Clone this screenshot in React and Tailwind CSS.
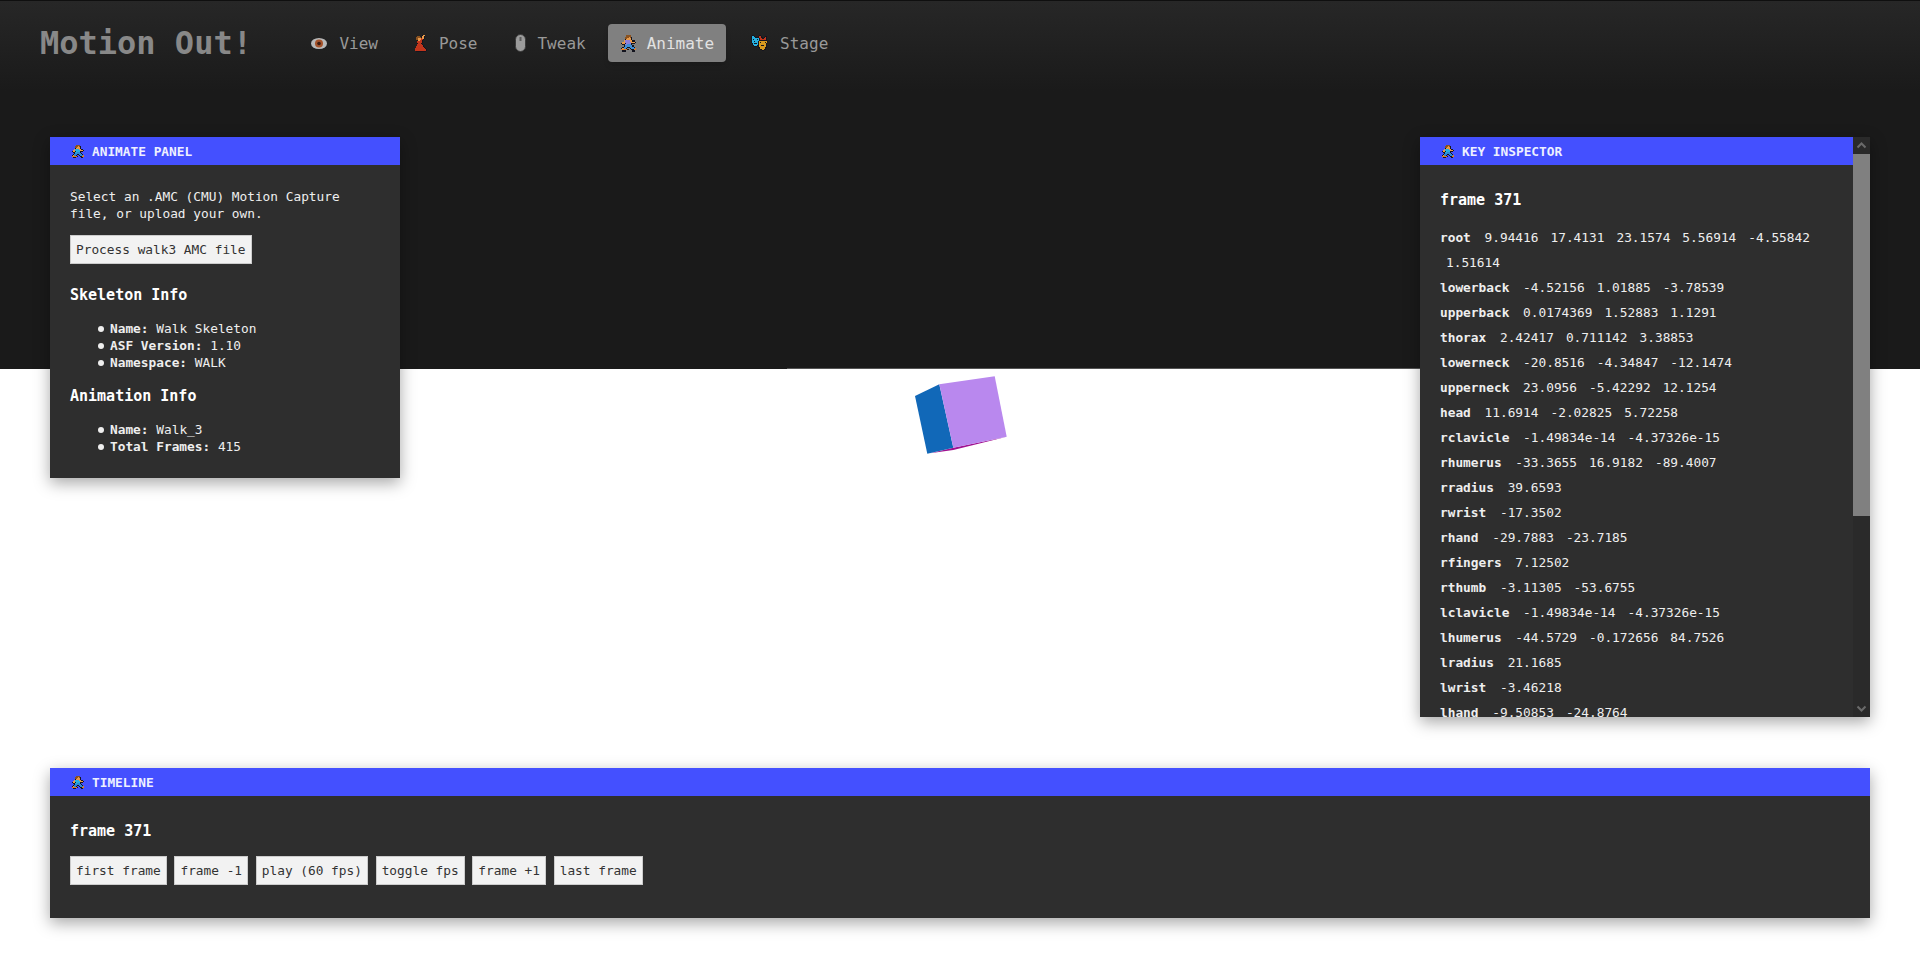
const runner = [
  "....hhhh....",
  "...hhhshk...",
  "...hhsssk...",
  "...kssssk...",
  "..sbbbbsskk.",
  ".ssbbbbbsssk",
  "ksskbbbbkkk.",
  ".kkbbpppk...",
  "..kppppppk..",
  ".kpppkkpppk.",
  "ksppk..kpppo",
  "oooook..kkoo",
  ".kkk.....kk.",
];

const dancer = [
  ".......kss...",
  "..hhh.kssk...",
  ".hhhhhkssk...",
  ".hhsssrssk...",
  ".hhsssrrk....",
  "..kssrrk.....",
  "..rrrrrk.....",
  "..rrrrrk.....",
  "..krrrk......",
  "..rrrrrk.....",
  "..rrrrrrk....",
  ".rrrrrrrk....",
  ".rrrrrrrrk...",
  "rrrrrrrrrrk..",
  "rrrrrrrrrrrk.",
  "rrrrrrrrrrrk.",
  ".kkkkkkkkkk..",
];

const masks = [
  "..kk.....kk.......",
  ".kbbk...krrk...kk.",
  ".kbbbkkkkrrkk.krk.",
  ".kbbbbbbbkrrkkrrk.",
  ".kbkbbbkbkrrrrrrk.",
  ".kbbbbbbbkkkkkkkk.",
  ".kbbkbbbkyyyyyyyyk",
  ".kbbbbbbkykyyyyky.",
  "..kbkkkbkyyyyyyyk.",
  "..kbbbbbkyyyyyyyk.",
  "...kbbbkkyykkkyyk.",
  "....kkk.kyyyyyyyk.",
  "........kkyyyyykk.",
  ".........kyyyyyk..",
  "..........kkyykk..",
  "............kk....",
];

const colors = {
  k: "#14141e",
  h: "#8a5220",
  s: "#e89a4a",
  b: "#25b0e0",
  p: "#2c86d8",
  o: "#e07a28",
  r: "#c2361c",
  y: "#d79a1e",
};

const navPalette = { ...colors, b: "#8f7fd8", p: "#3f8fd8" };

const PixelIcon = ({ rows, palette = colors, className = "" }) => (
  <svg
    viewBox={`0 0 ${rows[0].length} ${rows.length}`}
    shapeRendering="crispEdges"
    className={className}
  >
    {rows.map((row, y) =>
      row.split("").map((c, x) =>
        c === "." ? null : (
          <rect key={`${x}-${y}`} x={x} y={y} width="1" height="1" fill={palette[c]} />
        )
      )
    )}
  </svg>
);

const EyeIcon = () => (
  <svg viewBox="0 0 16 11" className="w-[16px] h-[11px]">
    <ellipse cx="8" cy="5.5" rx="8" ry="5.5" fill="#b9b9b9" />
    <circle cx="8" cy="5.5" r="4" fill="#a5532b" />
    <circle cx="8" cy="5.5" r="1.8" fill="#3b1c12" />
  </svg>
);

const MouseIcon = () => (
  <svg viewBox="0 0 11 18" className="w-[11px] h-[18px]">
    <rect x="0.5" y="0.5" width="10" height="17" rx="5" fill="#9b9b9b" stroke="#3a3a3a" />
    <rect x="4.5" y="3" width="2" height="4" fill="#5c5c5c" />
  </svg>
);

const navItems = [
  { label: "View", icon: <EyeIcon />, slot: "w-[28.5px] -ml-[1px]" },
  {
    label: "Pose",
    icon: <PixelIcon rows={dancer} className="w-[13px] h-[17px]" />,
    slot: "w-[27px] pl-[3.5px]",
  },
  { label: "Tweak", icon: <MouseIcon />, slot: "w-[26px] pl-[4px]" },
  {
    label: "Animate",
    icon: <PixelIcon rows={runner} palette={navPalette} className="w-[15px] h-[17px]" />,
    slot: "w-[27px] pl-[1px]",
    active: true,
  },
  {
    label: "Stage",
    icon: <PixelIcon rows={masks} className="w-[18px] h-[16px]" />,
    slot: "w-[32px] pl-[2px]",
  },
];

const keyRows = [
  ["root", "9.94416", "17.4131", "23.1574", "5.56914", "-4.55842", "1.51614"],
  ["lowerback", "-4.52156", "1.01885", "-3.78539"],
  ["upperback", "0.0174369", "1.52883", "1.1291"],
  ["thorax", "2.42417", "0.711142", "3.38853"],
  ["lowerneck", "-20.8516", "-4.34847", "-12.1474"],
  ["upperneck", "23.0956", "-5.42292", "12.1254"],
  ["head", "11.6914", "-2.02825", "5.72258"],
  ["rclavicle", "-1.49834e-14", "-4.37326e-15"],
  ["rhumerus", "-33.3655", "16.9182", "-89.4007"],
  ["rradius", "39.6593"],
  ["rwrist", "-17.3502"],
  ["rhand", "-29.7883", "-23.7185"],
  ["rfingers", "7.12502"],
  ["rthumb", "-3.11305", "-53.6755"],
  ["lclavicle", "-1.49834e-14", "-4.37326e-15"],
  ["lhumerus", "-44.5729", "-0.172656", "84.7526"],
  ["lradius", "21.1685"],
  ["lwrist", "-3.46218"],
  ["lhand", "-9.50853", "-24.8764"],
];

const timelineButtons = [
  "first frame",
  "frame -1",
  "play (60 fps)",
  "toggle fps",
  "frame +1",
  "last frame",
];

const PanelHeader = ({ title }) => (
  <div className="flex items-center h-[28px] shrink-0 pl-[22px] gap-[8px] bg-[#4450ff] text-[#eef0ff] font-bold uppercase">
    <PixelIcon rows={runner} className="w-[12px] h-[13px]" />
    <span>{title}</span>
  </div>
);

const Button = ({ children }) => (
  <button className="h-[29px] px-[5px] border border-[#cccccc] bg-[#f2f2f2] text-[#333333] whitespace-nowrap">
    {children}
  </button>
);

const Heading = ({ children, className = "" }) => (
  <h2 className={`text-[15px] leading-[20px] font-bold text-white ${className}`}>
    {children}
  </h2>
);

const Info = ({ items, className = "" }) => (
  <ul className={`pl-[40px] ${className}`}>
    {items.map(([k, v]) => (
      <li
        key={k}
        className="relative before:absolute before:left-[-12px] before:top-[6px] before:size-[6px] before:rounded-full before:bg-[#eeeeee]"
      >
        <b>{k}:</b> {v}
      </li>
    ))}
  </ul>
);

const Chevron = ({ points }) => (
  <svg viewBox="0 0 17 17" className="w-[17px] h-[17px]">
    <polyline points={points} fill="none" stroke="#6a6a6a" strokeWidth="2" />
  </svg>
);

const App = () => {
  return (
    <div className="relative min-h-screen border-t border-[#0f0f0f] pt-[23px] bg-[linear-gradient(#272727,#1a1a1a_90px,#1a1a1a_368px,#ffffff_368px)] font-['DejaVu_Sans_Mono','Liberation_Mono',monospace] text-[12.8px] leading-[17px] text-[#eeeeee]">
      {/* top bar */}
      <div className="flex items-center h-[38px] pl-[40px] gap-[48px]">
        <h1 className="text-[32px] leading-[38px] font-bold text-[#888888]">Motion Out!</h1>
        <nav className="flex gap-[10px] text-[16px]">
          {navItems.map((item) => (
            <div
              key={item.label}
              className={`flex items-center h-[38px] px-[12px] rounded-[4px] ${
                item.active
                  ? "bg-[#808080] text-[#e2e2e2] shadow-md"
                  : "text-[#999999]"
              }`}
            >
              <span className={`flex items-center shrink-0 ${item.slot}`}>{item.icon}</span>
              {item.label}
            </div>
          ))}
        </nav>
      </div>

      {/* edge of the stage canvas */}
      <div className="absolute left-[787px] top-[367px] w-[633px] h-[1px] bg-[#555555]" />

      {/* cube drawn on the stage */}
      <svg
        viewBox="0 0 100 85"
        className="absolute left-[910px] top-[372px] w-[100px] h-[85px]"
      >
        <polygon points="20,80.2 43.3,74.7 96.7,63.7 43.3,77" fill="#a0108f" />
        <polygon points="5,23 29.3,11.3 43.3,74.7 17.3,80.7" fill="#1168b8" />
        <polygon points="29.3,11.3 84.7,3.3 96.7,63.7 43.3,74.7" fill="#b988ee" />
      </svg>

      <div className="relative px-[50px] pt-[75px]">
        <div className="flex justify-between items-start h-[580px]">
          <section className="w-[350px] bg-[#2e2e2e] shadow-[0_5px_15px_rgba(0,0,0,0.35)]">
            <PanelHeader title="Animate Panel" />
            <div className="px-[20px] pt-[22.5px] pb-[23.5px]">
              <p>
                Select an .AMC (CMU) Motion Capture
                <br />
                file, or upload your own.
              </p>
              <div className="mt-[13.5px]">
                <Button>Process walk3 AMC file</Button>
              </div>
              <Heading className="mt-[21px]">Skeleton Info</Heading>
              <Info
                className="mt-[14.5px]"
                items={[
                  ["Name", "Walk Skeleton"],
                  ["ASF Version", "1.10"],
                  ["Namespace", "WALK"],
                ]}
              />
              <Heading className="mt-[15.5px]">Animation Info</Heading>
              <Info
                className="mt-[14.5px]"
                items={[
                  ["Name", "Walk_3"],
                  ["Total Frames", "415"],
                ]}
              />
            </div>
          </section>

          <section className="flex w-[450px] h-[580px] bg-[#2e2e2e] shadow-[0_5px_15px_rgba(0,0,0,0.35)]">
            <div className="flex flex-col flex-1 min-w-0 overflow-hidden">
              <PanelHeader title="Key Inspector" />
              <div className="px-[20px] pt-[25px]">
                <Heading>frame 371</Heading>
                <div className="mt-[14.5px] leading-[25px]">
                  {keyRows.map(([name, ...values]) => (
                    <div key={name}>
                      <b>{name}</b>{" "}
                      {values.map((v, i) => (
                        <span key={i} className="inline-block mx-[6px]">
                          {v}
                        </span>
                      ))}
                    </div>
                  ))}
                </div>
              </div>
            </div>
            {/* scrollbar */}
            <div className="flex flex-col w-[17px] shrink-0 bg-[#2a2a2a]">
              <Chevron points="4.5,10.5 8.5,6.5 12.5,10.5" />
              <div className="h-[362px] bg-[#808080]" />
              <div className="flex-1" />
              <Chevron points="4.5,6.5 8.5,10.5 12.5,6.5" />
            </div>
          </section>
        </div>

        <section className="mt-[51px] bg-[#2e2e2e] shadow-[0_5px_15px_rgba(0,0,0,0.35)]">
          <PanelHeader title="Timeline" />
          <div className="px-[20px] pt-[25px] pb-[33px]">
            <Heading>frame 371</Heading>
            <div className="flex gap-[7.7px] mt-[15px]">
              {timelineButtons.map((label) => (
                <Button key={label}>{label}</Button>
              ))}
            </div>
          </div>
        </section>
      </div>
    </div>
  );
};

export default App;
